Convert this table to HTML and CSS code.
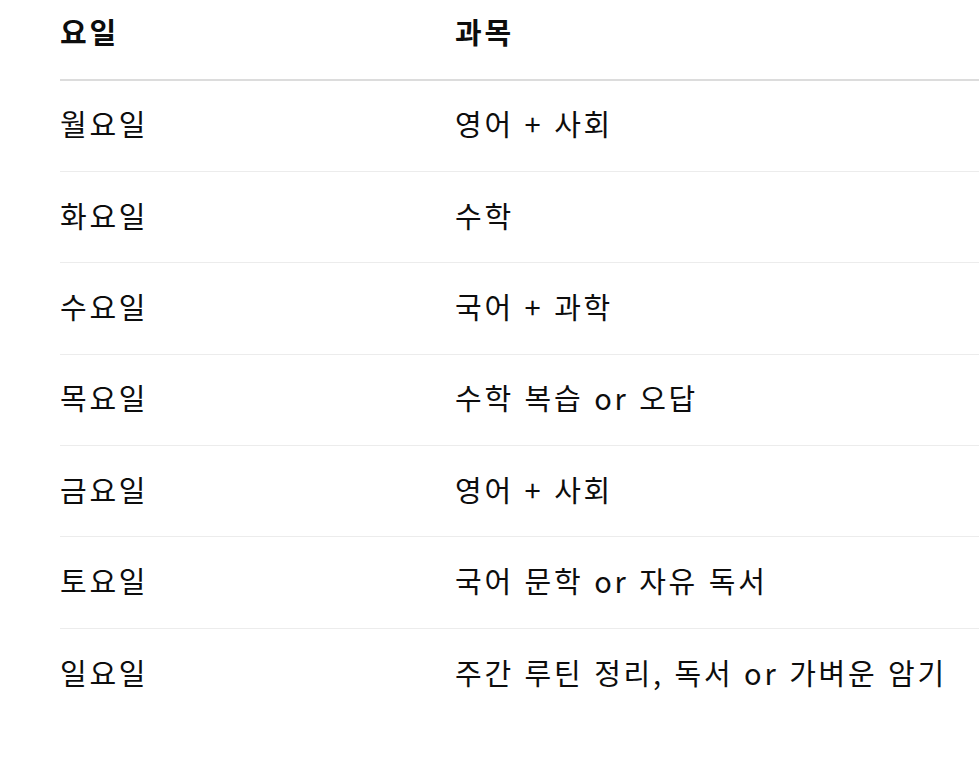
FILE: index.html
```html
<!DOCTYPE html>
<html lang="ko">
<head>
<meta charset="utf-8">
<link rel="stylesheet" href="styles.css">
</head>
<body>
<table class="schedule">
  <colgroup><col class="c-day"><col class="c-subj"></colgroup>
  <thead>
    <tr><th>요일</th><th>과목</th></tr>
  </thead>
  <tbody>
    <tr><td>월요일</td><td>영어 + 사회</td></tr>
    <tr><td>화요일</td><td>수학</td></tr>
    <tr><td>수요일</td><td>국어 + 과학</td></tr>
    <tr><td>목요일</td><td>수학 복습 or 오답</td></tr>
    <tr><td>금요일</td><td>영어 + 사회</td></tr>
    <tr><td>토요일</td><td>국어 문학 or 자유 독서</td></tr>
    <tr><td>일요일</td><td>주간 루틴 정리, 독서 or 가벼운 암기</td></tr>
  </tbody>
</table>
</body>
</html>
```
FILE: styles.css
```css
html, body {
  margin: 0;
  padding: 0;
  background: #ffffff;
  overflow: hidden;
}
body {
  font-family: "Noto Sans CJK KR", "Noto Sans", sans-serif;
  color: #0d0d0d;
  font-size: 29px;
  letter-spacing: 2.7px;
}
.schedule {
  margin-left: 60px;
  width: 1000px;
  border-collapse: collapse;
  table-layout: fixed;
}
.c-day { width: 395px; }
.schedule th {
  text-align: left;
  font-weight: 700;
  height: 80px;
  padding: 0;
  vertical-align: top;
  padding-top: 9px;
  box-sizing: border-box;
  border-bottom: 2px solid #dcdcdc;
  line-height: 44px;
}
.schedule td {
  padding: 0 0 5px 0;
  height: 91.4px;
  box-sizing: border-box;
  line-height: 44px;
  vertical-align: middle;
  border-bottom: 1px solid #ececec;
}
.schedule tbody tr:last-child td { border-bottom: none; }
```
